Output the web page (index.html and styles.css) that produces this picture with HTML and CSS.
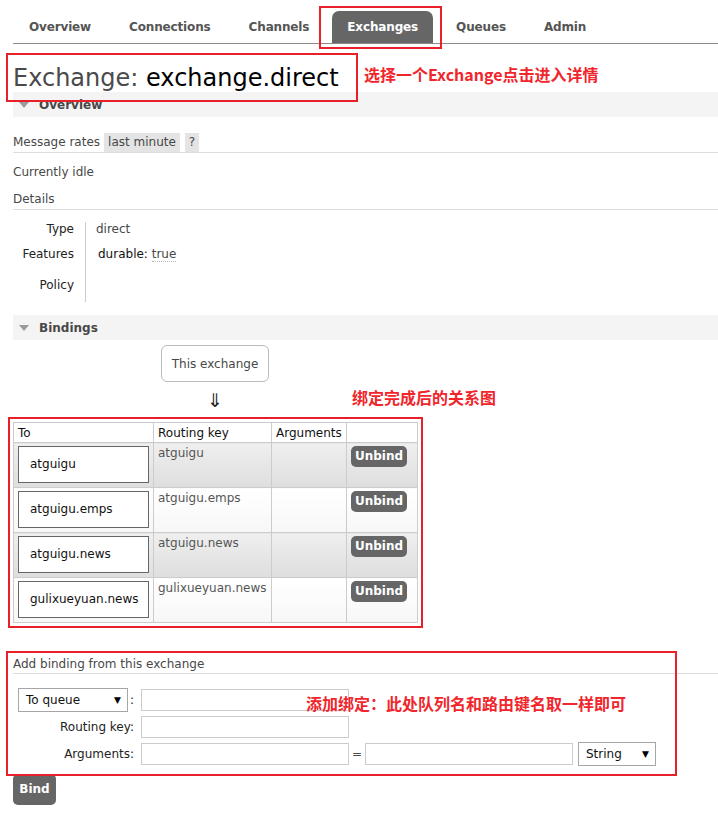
FILE: index.html
```html
<!DOCTYPE html>
<html>
<head>
<meta charset="utf-8">
<link rel="stylesheet" href="styles.css">
</head>
<body>
<div class="page">
  <nav class="tabs">
    <a class="tab">Overview</a>
    <a class="tab">Connections</a>
    <a class="tab">Channels</a>
    <a class="tab active">Exchanges</a>
    <a class="tab">Queues</a>
    <a class="tab">Admin</a>
  </nav>

  <div class="title-row">
    <h1><span class="lbl">Exchange:</span> <span class="name">exchange.direct</span></h1>
    <span class="note note1">选择一个Exchange点击进入详情</span>
  </div>

  <div class="sec-h"><span class="tri"></span>Overview</div>
  <div class="rates">
    <span>Message rates</span>
    <span class="chip">last minute</span>
    <span class="chip q-chip">?</span>
  </div>
  <div class="idle">Currently idle</div>
  <div class="details-h">Details</div>
  <div class="dt">
    <div class="dl r1">Type</div><div class="dv r1">direct</div>
    <div class="dl r2">Features</div><div class="dv r2 feat"><span class="k">durable:</span> <span class="t">true</span></div>
    <div class="dl r3">Policy</div><div class="dv r3"></div>
  </div>

  <div class="sec-h bind-h"><span class="tri"></span>Bindings</div>
  <div class="this-ex">This exchange</div>
  <div class="arrow-row">
    <div class="arrow">⇓</div>
    <span class="note note2">绑定完成后的关系图</span>
  </div>

  <div class="tbl-wrap">
    <table class="bt">
      <colgroup><col class="c1"><col class="c2"><col class="c3"><col class="c4"></colgroup>
      <thead>
        <tr><th>To</th><th>Routing key</th><th>Arguments</th><th></th></tr>
      </thead>
      <tbody>
        <tr class="alt1"><td><div class="qbox">atguigu</div></td><td class="rk">atguigu</td><td></td><td><div class="btn">Unbind</div></td></tr>
        <tr class="alt2"><td><div class="qbox">atguigu.emps</div></td><td class="rk">atguigu.emps</td><td></td><td><div class="btn">Unbind</div></td></tr>
        <tr class="alt1"><td><div class="qbox">atguigu.news</div></td><td class="rk">atguigu.news</td><td></td><td><div class="btn">Unbind</div></td></tr>
        <tr class="alt2"><td><div class="qbox">gulixueyuan.news</div></td><td class="rk">gulixueyuan.news</td><td></td><td><div class="btn">Unbind</div></td></tr>
      </tbody>
    </table>
  </div>

  <div class="add">
    <div class="add-h">Add binding from this exchange</div>
    <div class="frow first">
      <div class="flabel sel-label"><div class="sel sel-q"><span>To queue</span><span class="caret">▼</span></div><span class="colon">:</span></div>
      <div class="inp"></div>
    </div>
    <div class="frow">
      <div class="flabel">Routing key:</div>
      <div class="inp"></div>
    </div>
    <div class="frow">
      <div class="flabel">Arguments:</div>
      <div class="inp"></div>
      <span class="eq">=</span>
      <div class="inp"></div>
      <div class="sel sel-s"><span>String</span><span class="caret">▼</span></div>
    </div>
    <span class="note note3">添加绑定：此处队列名和路由键名取一样即可</span>
  </div>
  <div class="bind">Bind</div>
</div>
</body>
</html>
```

FILE: styles.css
```css
* { box-sizing: border-box; }
body {
  margin: 0;
  font-family: "DejaVu Sans", Verdana, sans-serif;
  font-size: 12px;
  color: #484848;
  background: #fff;
}
.page { padding-left: 13px; }

/* tabs */
.tabs {
  display: flex;
  margin-top: 11px;
  padding-left: 1px;
  height: 33px;
  border-bottom: 1px solid #8a8a8a;
}
.tab {
  position: relative;
  padding: 0 15px;
  margin-right: 8px;
  line-height: 32px;
  font-weight: bold;
  font-size: 12px;
  letter-spacing: -0.15px;
  color: #555;
  border-radius: 7px 7px 0 0;
}
.tab.active { background: #666; color: #fff; }
.tab.active::after {
  content: "";
  position: absolute;
  left: -13px; right: -9px; top: -5px; bottom: -6px;
  border: 2px solid #e8202a;
}

/* title */
.title-row { position: relative; height: 48px; padding-top: 20px; }
h1 {
  position: relative;
  display: inline-block;
  margin: 0;
  font-size: 24px;
  font-weight: normal;
  line-height: 28px;
  color: #4a4a4a;
}
h1 .name { color: #000; }
h1::after {
  content: "";
  position: absolute;
  left: -7px; top: -11px;
  width: 348px; height: 45px;
  border: 2px solid #e8202a;
}
.note {
  font-family: "Noto Sans CJK SC", sans-serif;
  font-weight: bold;
  font-size: 16px;
  line-height: 20px;
  color: #f0262c;
  white-space: nowrap;
}
.note1 { position: absolute; left: 351px; top: 20px; }

/* section headers */
.sec-h {
  height: 25px;
  background: #f4f4f4;
  display: flex;
  align-items: center;
  font-weight: bold;
  font-size: 12px;
  color: #484848;
}
.tri {
  width: 0; height: 0;
  border-left: 5px solid transparent;
  border-right: 5px solid transparent;
  border-top: 6px solid #9a9a9a;
  margin: 0 10px 0 6px;
}

.rates {
  margin-top: 16px;
  height: 20px;
  border-bottom: 1px solid #ddd;
  display: flex;
  line-height: 19px;
}
.chip { background: #e4e4e4; padding: 0 4px; margin-left: 4px; }
.q-chip { margin-left: 5px; width: 14px; padding: 0; text-align: center; }

.idle { margin-top: 9px; line-height: 20px; }
.details-h { margin-top: 7px; line-height: 20px; border-bottom: 1px solid #ddd; }

.dt {
  margin-top: 12px;
  display: grid;
  grid-template-columns: 73px auto;
}
.dl {
  border-right: 1px solid #ccc;
  text-align: right;
  padding-right: 11px;
  color: #222;
}
.dv { padding-left: 10px; }
.r1 { height: 24px; line-height: 14px; }
.r2 { height: 24px; line-height: 16px; }
.r3 { height: 32px; line-height: 16px; padding-top: 7px; }
.feat { padding-left: 12px; }
.feat .k { color: #111; }
.feat .t { border-bottom: 1px dotted #bbb; }

.bind-h { margin-top: 13px; }
.this-ex {
  margin: 5px 0 0 148px;
  width: 108px;
  height: 37px;
  border: 1px solid #bbb;
  border-radius: 6px;
  display: flex;
  align-items: center;
  justify-content: center;
}
.arrow-row { display: flex; align-items: center; height: 35px; }
.arrow {
  margin-left: 148px;
  width: 108px;
  text-align: center;
  font-size: 19px;
  line-height: 30px;
  color: #222;
}
.note2 { margin-left: 83px; margin-top: -5px; }

/* bindings table */
.tbl-wrap {
  display: block;
  width: fit-content;
  margin-left: -5px;
  border: 2px solid #e8202a;
  padding: 3px;
}
.bt {
  display: table;
  border-collapse: collapse;
  table-layout: fixed;
  width: 404px;
}
.c1 { width: 140px; } .c2 { width: 118px; } .c3 { width: 75px; } .c4 { width: 71px; }
.bt th {
  border: 1px solid #ccc;
  height: 20px;
  padding: 0 4px;
  font-weight: normal;
  text-align: left;
  color: #111;
  background: #fff;
}
.bt td {
  border: 1px solid #ccc;
  height: 45px;
  padding: 3px 4px 0;
  vertical-align: top;
}
.alt1 td { background: linear-gradient(#efefef, #dedede); }
.alt2 td { background: linear-gradient(#fff, #f7f7f7); }
.qbox {
  height: 37px;
  border: 1px solid #666;
  background: #fff;
  line-height: 35px;
  padding-left: 11px;
  color: #111;
  white-space: nowrap;
}
.bt td.rk { padding-top: 3px; line-height: 14px; color: #555; }
.btn {
  width: 56px;
  height: 21px;
  line-height: 21px;
  background: #666;
  color: #fff;
  font-weight: bold;
  text-align: center;
  border-radius: 5px;
}

/* add binding */
.add { position: relative; }
.add::after {
  content: "";
  position: absolute;
  left: -7px; top: -4px;
  width: 667px; height: 121px;
  border: 2px solid #e8202a;
  pointer-events: none;
}
.add-h {
  margin-top: 27px;
  line-height: 18px;
  border-bottom: 1px solid #ddd;
}
.frow { display: flex; align-items: center; margin-top: 4px; }
.frow.first { margin-top: 14px; }
.flabel { width: 121px; margin-right: 7px; text-align: right; color: #222; }
.sel-label { display: flex; align-items: center; }
.sel {
  display: flex;
  align-items: center;
  justify-content: space-between;
  height: 24px;
  border: 1px solid #a6a6a6;
  background: #fff;
  padding: 0 6px 0 7px;
  color: #111;
  font-size: 12px;
}
.sel-q { margin-left: 5px; width: 110px; }
.colon { margin-left: 2px; }
.caret { font-size: 9px; color: #000; }
.inp { width: 208px; height: 22px; border: 1px solid #ccc; background: #fff; }
.eq { width: 16px; text-align: center; }
.sel-s { margin-left: 5px; width: 78px; }
.note3 { position: absolute; left: 293px; top: 38px; }

.bind {
  margin-top: 8px;
  width: 43px;
  height: 31px;
  line-height: 31px;
  background: #666;
  color: #fff;
  font-weight: bold;
  text-align: center;
  border-radius: 5px;
}
```
